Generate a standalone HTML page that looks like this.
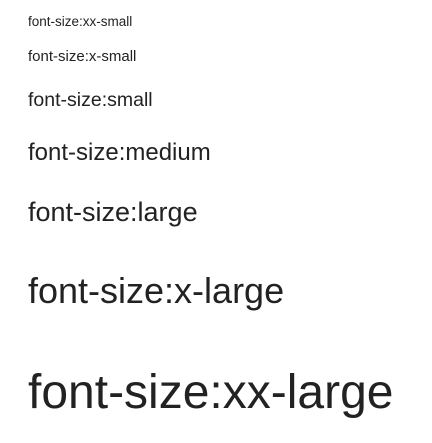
<!DOCTYPE html>
<html><head><meta charset="utf-8"><style>
html,body{margin:0;padding:0;background:#fff;width:432px;height:443px;overflow:hidden}
svg{display:block}
text{font-family:"Liberation Sans",sans-serif;fill:#222}
</style></head><body>
<svg width="432" height="443" xmlns="http://www.w3.org/2000/svg">
<text x="28" y="26" font-size="13.5">font-size:xx-small</text>
<text x="28" y="61" font-size="15">font-size:x-small</text>
<text x="28" y="106" font-size="19.5">font-size:small</text>
<text x="28" y="160" font-size="24">font-size:medium</text>
<text x="28" y="221" font-size="27">font-size:large</text>
<text x="28" y="303" font-size="36">font-size:x-large</text>
<text x="28" y="408" font-size="48">font-size:xx-large</text>
</svg>
</body></html>
